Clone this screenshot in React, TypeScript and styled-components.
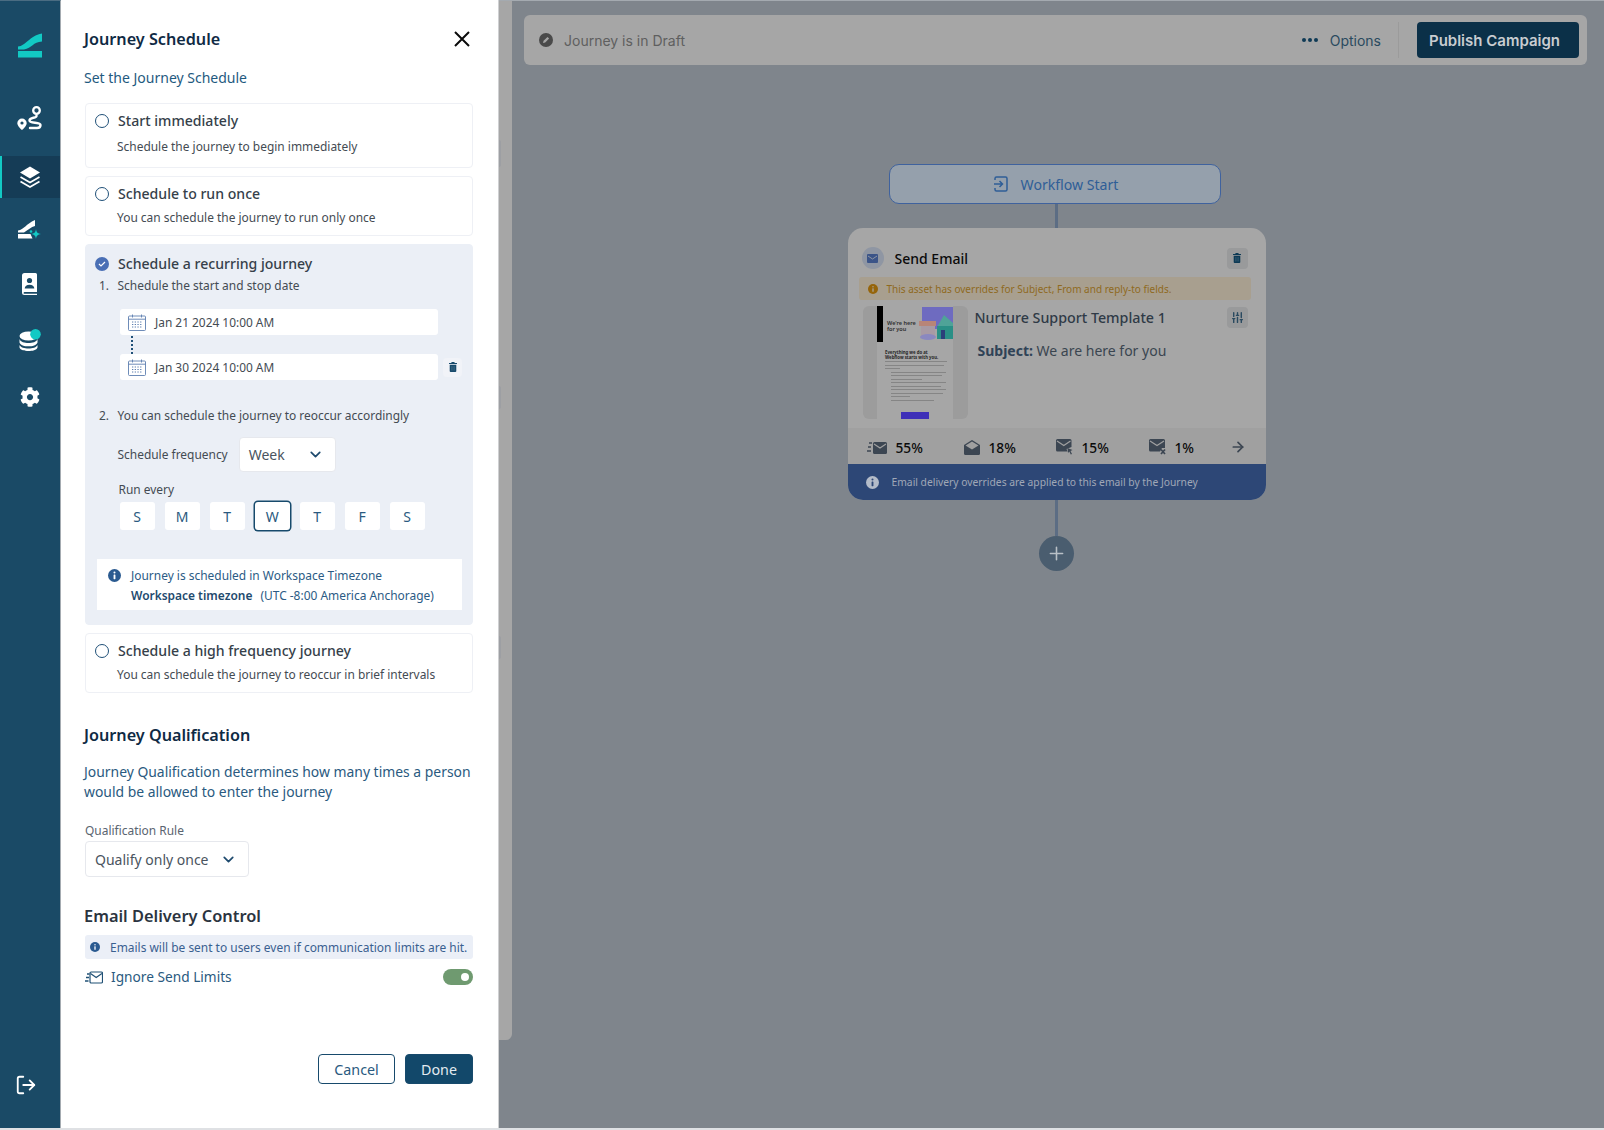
import React from 'react'
import styled, { createGlobalStyle } from 'styled-components'
import { ArrowRight, ChevronDown, LogOut, Plus, SlidersVertical } from 'lucide-react'
import { FaCog } from 'react-icons/fa'

const GlobalStyle = createGlobalStyle`
  html, body {
    margin: 0;
    padding: 0;
    height: 100%;
    overflow: hidden;
    background: #7f858c;
    font-family: "Noto Sans", "Open Sans", sans-serif;
  }
  #root {
    height: 100%;
  }
  * {
    box-sizing: border-box;
  }
  svg {
    flex-shrink: 0;
  }
`

const LogoIcon = () => (
  <svg width="24" height="25" viewBox="0 0 24 25">
    <path d="M0 13.500C8 13 11 3 24 0.500v8C15 9 14 15 6 16.500H0z" fill="#12c9c4" />
    <rect x="0" y="18" width="24" height="6.500" fill="#12c9c4" />
  </svg>
)

const RouteIcon = () => (
  <svg width="25" height="24" viewBox="0 0 25 24">
    <path d="M5 12.500a4.700 4.700 0 0 0-4.700 4.700C.3 20 5 24 5 24s4.700-4 4.700-6.800A4.700 4.700 0 0 0 5 12.500z" fill="#fff" />
    <circle cx="5" cy="17" r="1.600" fill="#1a4a66" />
    <circle cx="19.500" cy="4.500" r="3.300" fill="none" stroke="#fff" strokeWidth="2.300" />
    <path d="M19.500 9.500v.5c0 2.500-7 1-7 4.500s11 1 11 4.500c0 2-1.500 3-3.500 3h-7" fill="none" stroke="#fff" strokeWidth="2.400" strokeLinecap="round" />
  </svg>
)

const LayersIcon = () => (
  <svg width="20" height="22" viewBox="0 0 20 22">
    <path d="M10 0.500 20 6.500 10 12.500 0 6.500z" fill="#fff" />
    <path d="M.5 11 10 16.500 19.500 11M.5 15.500 10 21 19.500 15.500" fill="none" stroke="#fff" strokeWidth="1.700" />
  </svg>
)

const NewCampaignIcon = () => (
  <svg width="23" height="22" viewBox="0 0 23 22">
    <path d="M0 10.500C6 9.500 8 4 17 0v6C13 7 10 10 6 12.500H0z" fill="#fff" />
    <path d="M0 14h12.500l2 4.500H0z" fill="#fff" />
    <circle cx="13" cy="11.500" r="1.300" fill="#12c9c4" />
    <path d="M18 9c.6 3.500 1.500 4.500 5 5-3.500.6-4.400 1.500-5 5-.6-3.500-1.500-4.400-5-5 3.500-.5 4.400-1.500 5-5z" fill="#12c9c4" />
  </svg>
)

const ContactsIcon = () => (
  <svg width="15" height="22" viewBox="0 0 15 22">
    <path d="M2.500 0H13.500A1.500 1.500 0 0 1 15 1.500V19H2.500a.9.9 0 0 0 0 1.800H15V22H2.500A2.500 2.500 0 0 1 0 19.500V2.500A2.500 2.500 0 0 1 2.500 0z" fill="#fff" />
    <circle cx="7.500" cy="7.500" r="2.600" fill="#1a4a66" />
    <path d="M2.700 15.500c0-2.400 2-3.800 4.800-3.800s4.800 1.400 4.800 3.800z" fill="#1a4a66" />
  </svg>
)

const DataIcon = () => (
  <svg width="22" height="22" viewBox="0 0 22 22">
    <ellipse cx="9.500" cy="7" rx="9" ry="4.500" fill="#fff" />
    <path d="M.5 10c1 3 5 4 9 4s8-1 9-4v3.500c-1 3-5 3.800-9 3.800s-8-.8-9-3.800z" fill="#fff" />
    <path d="M.5 16c1 2.500 5 3.500 9 3.500s8-1 9-3.500v2.500c-1 2.800-5 3.500-9 3.500s-8-.7-9-3.500z" fill="#fff" />
    <circle cx="16.500" cy="5.300" r="5.300" fill="#12c9c4" />
  </svg>
)

const CalendarIcon = () => (
  <svg width="18" height="17" viewBox="0 0 18 17" fill="none" stroke="#5d7fb0" strokeWidth="0.900">
    <rect x="0.500" y="2" width="17" height="14.500" rx="1" />
    <path d="M0.500 5.200h17M4.500 0.500v3M13.500 0.500v3" />
    <path d="M4 8h10M4 10.500h10M4 13h10" strokeDasharray="1.300 1.400" strokeWidth="1.100" />
  </svg>
)

const TrashIcon = ({ color = '#174a6c' }: { color?: string }) => (
  <svg width="8" height="10" viewBox="0 0 9 11">
    <path d="M0 1h2.500L3 0h3l.5 1H9v1.200H0z" fill={color} />
    <path d="M.8 3h7.400v7a1 1 0 0 1-1 1H1.800a1 1 0 0 1-1-1z" fill={color} />
    <path d="M3 4.500v5M4.500 4.500v5M6 4.500v5" stroke="#ffffff" strokeOpacity="0.300" strokeWidth="0.500" />
  </svg>
)

const InfoIcon = ({ size, fill, mark }: { size: number, fill: string, mark: string }) => (
  <svg width={size} height={size} viewBox="0 0 14 14">
    <circle cx="7" cy="7" r="7" fill={fill} />
    <rect x="6" y="6" width="2" height="5" rx="0.500" fill={mark} />
    <circle cx="7" cy="3.800" r="1.100" fill={mark} />
  </svg>
)

const CloseIcon = () => (
  <svg width="16" height="16" viewBox="0 0 16 16">
    <path d="M1 1l14 14M15 1 1 15" stroke="#0b0b0b" strokeWidth="2" />
  </svg>
)

const DraftIcon = () => (
  <svg width="14" height="14" viewBox="0 0 14 14">
    <circle cx="7" cy="7" r="7" fill="#4a4a4a" />
    <path d="M4 10l.6-2.200L8.500 4l1.600 1.500L6.200 9.400z" fill="#a6a6a6" />
  </svg>
)

const EnterIcon = () => (
  <svg width="14" height="16" viewBox="0 0 14 16" fill="none" stroke="#2f5e97" strokeWidth="1.500">
    <path d="M1 4V2.500A1.500 1.500 0 0 1 2.500 1h9A1.500 1.500 0 0 1 13 2.500v11a1.500 1.500 0 0 1-1.500 1.500h-9A1.500 1.500 0 0 1 1 13.500V12" />
    <path d="M0 8h8M5.500 5 8.500 8 5.500 11" />
  </svg>
)

const MailGlyph = ({ color }: { color: string }) => (
  <svg width="11" height="9" viewBox="0 0 11 9">
    <rect width="11" height="9" rx="1" fill={color} />
    <path d="M1 2l4.500 3L10 2" fill="none" stroke="#8f96a3" strokeWidth="1" />
  </svg>
)

const StatSent = () => (
  <svg width="20" height="13" viewBox="0 0 20 13">
    <path d="M2 2h3M1 6h3M0 10h4" stroke="#3c4652" strokeWidth="1.500" />
    <rect x="6" y="1" width="14" height="12" rx="1.500" fill="#3c4652" />
    <path d="M7 3l6 4 6-4" fill="none" stroke="#a0a0a0" strokeWidth="1.200" />
  </svg>
)

const StatOpen = () => (
  <svg width="16" height="15" viewBox="0 0 16 15">
    <path d="M8 0l8 5v8.500a1.500 1.500 0 0 1-1.500 1.500h-13A1.500 1.500 0 0 1 0 13.500V5z" fill="#3c4652" />
    <path d="M1.500 5.500 8 9.500l6.500-4L8 1.500z" fill="#a0a0a0" />
  </svg>
)

const StatClick = () => (
  <svg width="17" height="16" viewBox="0 0 17 16">
    <path d="M1.500 0h12.500A1.500 1.500 0 0 1 15.500 1.500V8l-5 2 1 2.500H1.500A1.500 1.500 0 0 1 0 11V1.500A1.500 1.500 0 0 1 1.500 0z" fill="#3c4652" />
    <path d="M1 2l6.800 4.500L14.500 2" fill="none" stroke="#a0a0a0" strokeWidth="1.200" />
    <path d="M11.500 9l5 2-2 1 1.500 3-1.200.6-1.500-3-1.300 1.300z" fill="#3c4652" />
  </svg>
)

const StatUnsub = () => (
  <svg width="17" height="16" viewBox="0 0 17 16">
    <path d="M1.500 0h13A1.500 1.500 0 0 1 16 1.500V9h-3l-2 3.500H1.500A1.500 1.500 0 0 1 0 11V1.500A1.500 1.500 0 0 1 1.500 0z" fill="#3c4652" />
    <path d="M1 2l7 4.500L15 2" fill="none" stroke="#a0a0a0" strokeWidth="1.200" />
    <path d="M12 10.500l4 4.500M16 10.500l-4 4.500" stroke="#3c4652" strokeWidth="1.700" />
  </svg>
)

const OutlineFastMail = () => (
  <svg width="18" height="13" viewBox="0 0 18 13" fill="none" stroke="#1f5075">
    <path d="M2 3h2.500M1 6.500h3M0 10h3.500" strokeWidth="1.300" />
    <rect x="5" y="1" width="12.500" height="11" rx="1.200" strokeWidth="1.200" />
    <path d="M5.500 2.500l5.700 4 5.700-4" strokeWidth="1.200" />
  </svg>
)

const Page = styled.div`
  display: flex;
  height: 100%;
  border-bottom: 2px solid #dfe1e4;
`

const Sidebar = styled.nav`
  width: 61px;
  flex-shrink: 0;
  background: #1a4a66;
  border-right: 1px solid #a4abb1;
  border-top: 1px solid #4a6c82;
  display: flex;
  flex-direction: column;
  align-items: stretch;
`

const LogoSlot = styled.div`
  height: 46px;
  margin-top: 32px;
  display: flex;
  justify-content: center;
  align-items: flex-start;
`

const NavItem = styled.div<{ $active?: boolean; $h: number }>`
  height: ${(p) => p.$h}px;
  display: flex;
  align-items: center;
  justify-content: center;
  padding-right: 1px;
  background: ${(p) => (p.$active ? '#153c56' : 'transparent')};
  box-shadow: ${(p) => (p.$active ? 'inset 2px 0 0 #12c9c4' : 'none')};
`

const LogoutSlot = styled.div`
  margin-top: auto;
  margin-bottom: 32px;
  padding-left: 15px;
  color: #fff;
  display: flex;
`

const Drawer = styled.aside`
  width: 438px;
  flex-shrink: 0;
  background: #fff;
  padding: 28px 25px 44px 24px;
  border-right: 1px solid #cfd0d2;
  display: flex;
  flex-direction: column;
`

const DrawerHead = styled.div`
  display: flex;
  align-items: center;
  justify-content: space-between;
  padding-right: 3px;
`

const Title = styled.h2<{ $dark?: boolean; $gap?: number; $size?: number }>`
  margin: ${(p) => p.$gap ?? 0}px 0 0 -1px;
  font-size: ${(p) => p.$size ?? 16.2}px;
  line-height: 22px;
  font-weight: 600;
  color: ${(p) => (p.$dark ? '#2b3440' : '#0f2a44')};
`

const Lead = styled.p`
  margin: 18px 0 15px -1px;
  font-size: 14px;
  line-height: 20px;
  color: #1f5a80;
`

const Cards = styled.div`
  display: flex;
  flex-direction: column;
  gap: 8px;
`

const Card = styled.section<{ $selected?: boolean; $pad: number }>`
  border: 1px solid ${(p) => (p.$selected ? '#ebeff6' : '#eef0f5')};
  background: ${(p) => (p.$selected ? '#ebeff6' : '#fff')};
  border-radius: 4px;
  padding: ${(p) => (p.$selected ? 9 : 7)}px 10px ${(p) => p.$pad}px 9px;
`

const OptionHead = styled.div`
  display: flex;
  align-items: center;
  gap: 9px;
`

const Radio = styled.span`
  width: 14px;
  height: 14px;
  flex-shrink: 0;
  border-radius: 50%;
  border: 1.300px solid #1f5078;
  background: #fff;
`

const RadioChecked = styled.span`
  width: 14px;
  height: 14px;
  flex-shrink: 0;
  border-radius: 50%;
  background: #4a6fb5;
  display: flex;
  align-items: center;
  justify-content: center;
`

const OptionTitle = styled.span`
  font-size: 14.100px;
  line-height: 20px;
  font-weight: 500;
  color: #363f4a;
`

const OptionDesc = styled.p<{ $gap: number }>`
  margin: ${(p) => p.$gap}px 0 0 22px;
  font-size: 11.950px;
  line-height: 18px;
  color: #444b53;
`

const Step = styled.div<{ $gap: number }>`
  display: flex;
  margin: ${(p) => p.$gap}px 0 0 4px;
  font-size: 11.950px;
  line-height: 18px;
  color: #444b53;
`

const StepNumber = styled.span`
  width: 18.500px;
`

const DateList = styled.div`
  margin: 14px 0 0 25px;
`

const DateRow = styled.div`
  display: flex;
  align-items: center;
  gap: 5px;
`

const DateField = styled.div`
  width: 318px;
  height: 26px;
  background: #fff;
  border-radius: 3px;
  padding-left: 8px;
  display: flex;
  align-items: center;
  gap: 9px;
  font-size: 11.900px;
  color: #444b53;
`

const DateConnector = styled.div`
  height: 18px;
  width: 2px;
  margin: 1px 0 0 11px;
  border-left: 2px dotted #1f5078;
`

const DeleteDate = styled.button`
  width: 19px;
  height: 19px;
  padding: 0;
  border: none;
  border-radius: 4px;
  background: #f1f3f8;
  display: flex;
  align-items: center;
  justify-content: center;
`

const FrequencyRow = styled.div`
  display: flex;
  align-items: center;
  gap: 11px;
  margin: 12px 0 0 22.500px;
  font-size: 11.950px;
  color: #444b53;
`

const SelectBox = styled.div<{ $w: number; $h: number }>`
  width: ${(p) => p.$w}px;
  height: ${(p) => p.$h}px;
  background: #fff;
  border: 1px solid #e6e8ed;
  border-radius: 4px;
  padding: 0 11px 0 9px;
  display: flex;
  align-items: center;
  justify-content: space-between;
  font-size: 14px;
  color: #4a5460;
`

const RunEvery = styled.div`
  margin: 9px 0 0 23.500px;
  font-size: 11.950px;
  line-height: 18px;
  color: #444b53;
`

const Days = styled.div`
  display: flex;
  gap: 10px;
  margin: 3px 0 0 24.700px;
`

const Day = styled.span<{ $active?: boolean }>`
  width: 35px;
  height: 28px;
  border-radius: 3px;
  background: #fff;
  display: flex;
  align-items: center;
  justify-content: center;
  font-size: 14px;
  color: #2a5a80;
  box-shadow: ${(p) => (p.$active ? '0 0 0 1.500px #174a6c' : 'none')};
`

const TimezoneNote = styled.div`
  margin: 29px 0 0 1.500px;
  height: 51px;
  background: #fff;
  padding: 6px 10px 6px 11px;
  display: grid;
  grid-template-columns: 23.500px 1fr;
  grid-auto-rows: 20.500px;
  align-items: center;
  font-size: 11.950px;
  color: #2b5b85;
`

const NoteLine = styled.span`
  grid-column: 2;
`

const Strong = styled.strong`
  font-weight: 600;
  color: #1e4a6e;
  margin-right: 8px;
`

const Paragraph = styled.p`
  margin: 16px 0 0 -1px;
  font-size: 13.920px;
  line-height: 20px;
  color: #2a5a80;
`

const FieldLabel = styled.label`
  display: block;
  margin: 20px 0 1px;
  font-size: 11.950px;
  line-height: 18px;
  color: #5a6470;
`

const Notice = styled.div`
  margin-top: 8px;
  height: 24px;
  background: #ebeff7;
  border-radius: 3px;
  padding-left: 5px;
  display: flex;
  align-items: center;
  gap: 10px;
  font-size: 11.950px;
  color: #3a6090;
  white-space: nowrap;
`

const ToggleRow = styled.div`
  margin-top: 8px;
  height: 20px;
  display: flex;
  align-items: center;
  gap: 8px;
  font-size: 13.700px;
  color: #2a5a80;
`

const ToggleText = styled.span`
  padding-bottom: 2px;
`

const Toggle = styled.span`
  margin-left: auto;
  width: 30px;
  height: 16px;
  border-radius: 8px;
  background: #6f9a70;
  padding: 4px 4px;
  display: flex;
  justify-content: flex-end;
`

const Knob = styled.span`
  width: 8px;
  height: 8px;
  border-radius: 50%;
  background: #fff;
`

const Footer = styled.div`
  margin-top: auto;
  display: flex;
  justify-content: flex-end;
  gap: 10px;
`

const Button = styled.button<{ $primary?: boolean; $w: number }>`
  width: ${(p) => p.$w}px;
  height: 30px;
  border-radius: 4px;
  border: 1px solid #174a6c;
  background: ${(p) => (p.$primary ? '#12486a' : '#fff')};
  color: ${(p) => (p.$primary ? '#e3ebf0' : '#2a5a80')};
  font-family: inherit;
  font-size: 14.300px;
`

const Canvas = styled.main`
  flex: 1;
  display: flex;
  min-width: 0;
  border-top: 1px solid #a4aab0;
`

const LeftRail = styled.div`
  width: 13px;
  height: 1039px;
  flex-shrink: 0;
  background: #a6a6a6;
  border-bottom-right-radius: 6px;
`

const RailHandle = styled.span<{ $top: number; $h: number }>`
  display: block;
  width: 2px;
  height: ${(p) => p.$h}px;
  margin-top: ${(p) => p.$top}px;
  background: #9d9fa3;
  border-radius: 0 2px 2px 0;
`

const CanvasBody = styled.div`
  flex: 1;
  min-width: 0;
  padding: 14px 17px 0 12px;
`

const TopBar = styled.header`
  height: 50px;
  background: #a6a6a6;
  border-radius: 6px;
  padding: 0 8px 0 15px;
  display: flex;
  align-items: center;
  font-family: Inter, "Noto Sans", sans-serif;
`

const DraftLabel = styled.span`
  margin-left: 11px;
  font-size: 14px;
  color: #5f5f5f;
`

const Options = styled.div`
  margin-left: auto;
  display: flex;
  align-items: center;
  gap: 12px;
  height: 100%;
  font-size: 14px;
  color: #2a4a5f;
  padding-right: 17px;
`

const OptionsDivider = styled.span`
  width: 1px;
  height: 36px;
  background: #9b9b9b;
  margin-right: 18px;
`

const Dots = styled.span`
  display: flex;
  gap: 2px;
`

const Dot = styled.i`
  width: 4px;
  height: 4px;
  border-radius: 50%;
  background: #0f3a55;
`

const Publish = styled.button`
  width: 162px;
  height: 36px;
  padding: 0 7px 0 0;
  border: none;
  border-radius: 4px;
  background: #0b3048;
  color: #c8ccd0;
  font-family: inherit;
  font-size: 15px;
  font-weight: 600;
`

const Flow = styled.div`
  display: flex;
  flex-direction: column;
  align-items: center;
  padding-left: 2px;
`

const StartNode = styled.div`
  margin: 99px 4px 0 0;
  width: 332px;
  height: 40px;
  border: 1px solid #3f629e;
  border-radius: 10px;
  background: #95a0ac;
  padding-left: 3px;
  display: flex;
  align-items: center;
  justify-content: center;
  gap: 13px;
  font-size: 14.100px;
  color: #2f5e97;
`

const Line = styled.span<{ $h: number }>`
  width: 3px;
  height: ${(p) => p.$h}px;
  background: #5c6d84;
`

const EmailCard = styled.article`
  width: 418px;
  height: 272px;
  background: #a6a6a6;
  border-radius: 15px;
  overflow: hidden;
  display: flex;
  flex-direction: column;
`

const EmailHead = styled.div`
  height: 22px;
  margin: 19px 18px 0 14px;
  display: flex;
  align-items: center;
  gap: 11px;
  font-size: 14px;
  font-weight: 500;
  color: #0a0a0a;
`

const GlyphCircle = styled.span`
  width: 22px;
  height: 22px;
  border-radius: 50%;
  background: #8f96a3;
  display: flex;
  align-items: center;
  justify-content: center;
`

const SquareBtn = styled.span<{ $push?: boolean }>`
  width: 21px;
  height: 21px;
  margin-left: ${(p) => (p.$push ? 'auto' : '0')};
  border-radius: 4px;
  background: #999a9b;
  flex-shrink: 0;
  display: flex;
  align-items: center;
  justify-content: center;
  color: #2a4a60;
`

const Warning = styled.div`
  margin: 8px 15px 0 11px;
  height: 23px;
  background: #a89f8f;
  border-radius: 3px;
  padding-left: 9px;
  display: flex;
  align-items: center;
  gap: 9px;
  font-size: 10px;
  color: #8f6a1e;
`

const EmailBody = styled.div`
  height: 113px;
  margin: 6px 18px 0 15px;
  display: flex;
`

const Thumb = styled.div`
  width: 105px;
  flex-shrink: 0;
  background: #9c9c9c;
  border-radius: 6px;
  display: flex;
  justify-content: center;
`

const ThumbDoc = styled.div`
  width: 76px;
  background: #a6a6a6;
  position: relative;
  padding: 44px 6px 0 8px;
`

const ThumbBar = styled.span`
  position: absolute;
  left: 0;
  top: 0;
  width: 6px;
  height: 36px;
  background: #000;
`

const ThumbHero = styled.span`
  position: absolute;
  left: 10px;
  top: 14px;
  font-size: 5.500px;
  line-height: 6px;
  font-weight: 600;
  color: #2d2d2d;
  white-space: nowrap;
`

const ThumbArt = styled.svg`
  position: absolute;
  left: 42px;
  top: 0;
`

const ThumbHeading = styled.div`
  font-size: 4.300px;
  line-height: 4.500px;
  font-weight: 700;
  color: #262626;
  margin-bottom: 2px;
`

const ThumbLine = styled.div<{ $w: number; $indent?: boolean }>`
  height: 1px;
  width: ${(p) => p.$w}%;
  margin: 0 0 2.500px ${(p) => (p.$indent ? 6 : 0)}px;
  background: #858585;
`

const ThumbCta = styled.span`
  position: absolute;
  left: 24px;
  bottom: 0;
  width: 28px;
  height: 7px;
  background: #3f30b8;
`

const EmailText = styled.div`
  flex: 1;
  padding-left: 7px;
`

const TemplateRow = styled.div`
  display: flex;
  align-items: flex-start;
  justify-content: space-between;
  font-size: 14.250px;
  line-height: 21px;
  font-weight: 500;
  color: #2f3a46;
  padding-top: 1px;
`

const Subject = styled.p`
  margin: 12px 0 0 3px;
  font-size: 14px;
  line-height: 21px;
  color: #3a4550;
`

const SubjectKey = styled.b`
  font-weight: 700;
  color: #2f4256;
`

const Stats = styled.div`
  margin-top: 9px;
  height: 36px;
  background: #a0a0a0;
  padding: 2px 20px 0 19px;
  display: grid;
  grid-template-columns: 97px 92px 93px 1fr auto;
  align-items: center;
  color: #3c4652;
`

const Stat = styled.div`
  display: flex;
  align-items: center;
  gap: 9px;
  font-size: 13.700px;
  font-weight: 500;
  color: #0a0a0a;
`

const Banner = styled.div`
  flex: 1;
  background: #2d4776;
  padding-left: 18px;
  display: flex;
  align-items: center;
  gap: 13px;
  font-size: 10.300px;
  color: #a0a8b6;
`

const AddStep = styled.span`
  width: 35px;
  height: 35px;
  border-radius: 50%;
  background: #4a5d6f;
  color: #b9c0c6;
  display: flex;
  align-items: center;
  justify-content: center;
`

const Chevron = () => <ChevronDown size={17} strokeWidth={2.4} color="#1e4a6e" />

const WEEK_DAYS = ['S', 'M', 'T', 'W', 'T', 'F', 'S']

const ScheduleOption = ({ title, desc, tall }: { title: string, desc: string, tall?: boolean }) => (
  <Card $pad={tall ? 11 : 8}>
    <OptionHead>
      <Radio />
      <OptionTitle>{title}</OptionTitle>
    </OptionHead>
    <OptionDesc $gap={tall ? 7 : 5}>{desc}</OptionDesc>
  </Card>
)

const Nav = () => (
  <Sidebar>
    <LogoSlot>
      <LogoIcon />
    </LogoSlot>
    <NavItem $h={77}><RouteIcon /></NavItem>
    <NavItem $h={42} $active><LayersIcon /></NavItem>
    <NavItem $h={66}><NewCampaignIcon /></NavItem>
    <NavItem $h={40}><ContactsIcon /></NavItem>
    <NavItem $h={71}><DataIcon /></NavItem>
    <NavItem $h={44}><FaCog size={20} color="#fff" /></NavItem>
    <LogoutSlot>
      <LogOut size={22} strokeWidth={2} />
    </LogoutSlot>
  </Sidebar>
)

const WorkflowCard = () => (
  <EmailCard>
    <EmailHead>
      <GlyphCircle><MailGlyph color="#3b5488" /></GlyphCircle>
      Send Email
      <SquareBtn $push><TrashIcon color="#0d3a55" /></SquareBtn>
    </EmailHead>
    <Warning>
      <InfoIcon size={10} fill="#96650a" mark="#a89f8f" />
      This asset has overrides for Subject, From and reply-to fields.
    </Warning>
    <EmailBody>
      <Thumb>
        <ThumbDoc>
          <ThumbBar />
          <ThumbHero>We're here<br />for you</ThumbHero>
          <ThumbArt width="34" height="35" viewBox="0 0 34 35">
            <rect x="3" y="1" width="31" height="22" fill="#6e6bc0" />
            <path d="M18 21 25 9l9 8v16H18z" fill="#4fa398" />
            <rect x="18" y="20" width="16" height="13" fill="#2a8f86" />
            <rect x="22" y="24" width="4" height="9" fill="#2b3f7a" />
            <rect x="0" y="15" width="17" height="5" fill="#b88578" />
            <rect x="2" y="20" width="14" height="10" fill="#a89aa4" />
            <ellipse cx="9" cy="31" rx="8" ry="3" fill="#8a88c0" />
          </ThumbArt>
          <ThumbHeading>Everything we do at Webflow starts with you.</ThumbHeading>
          <ThumbLine $w={100} />
          <ThumbLine $w={95} />
          <ThumbLine $w={24} />
          <ThumbLine $w={88} $indent />
          <ThumbLine $w={82} $indent />
          <ThumbLine $w={50} $indent />
          <ThumbLine $w={88} $indent />
          <ThumbLine $w={80} $indent />
          <ThumbLine $w={88} $indent />
          <ThumbLine $w={84} $indent />
          <ThumbLine $w={30} $indent />
          <ThumbLine $w={70} $indent />
          <ThumbCta />
        </ThumbDoc>
      </Thumb>
      <EmailText>
        <TemplateRow>
          Nurture Support Template 1
          <SquareBtn><SlidersVertical size={13} strokeWidth={2.6} /></SquareBtn>
        </TemplateRow>
        <Subject><SubjectKey>Subject:</SubjectKey> We are here for you</Subject>
      </EmailText>
    </EmailBody>
    <Stats>
      <Stat><StatSent /> 55%</Stat>
      <Stat><StatOpen /> 18%</Stat>
      <Stat><StatClick /> 15%</Stat>
      <Stat><StatUnsub /> 1%</Stat>
      <ArrowRight size={16} strokeWidth={2.6} />
    </Stats>
    <Banner>
      <InfoIcon size={13} fill="#b4bcc9" mark="#2d4776" />
      Email delivery overrides are applied to this email by the Journey
    </Banner>
  </EmailCard>
)

export default function App() {
  return (
    <>
      <GlobalStyle />
      <Page>
        <Nav />
        <Drawer>
          <DrawerHead>
            <Title>Journey Schedule</Title>
            <CloseIcon />
          </DrawerHead>
          <Lead>Set the Journey Schedule</Lead>
          <Cards>
            <ScheduleOption tall title="Start immediately" desc="Schedule the journey to begin immediately" />
            <ScheduleOption title="Schedule to run once" desc="You can schedule the journey to run only once" />
            <Card $selected $pad={14}>
              <OptionHead>
                <RadioChecked>
                  <svg width="8" height="6" viewBox="0 0 8 6">
                    <path d="M1 3l2 2 4-4" fill="none" stroke="#fff" strokeWidth="1.200" />
                  </svg>
                </RadioChecked>
                <OptionTitle>Schedule a recurring journey</OptionTitle>
              </OptionHead>
              <Step $gap={3}><StepNumber>1.</StepNumber>Schedule the start and stop date</Step>
              <DateList>
                <DateRow>
                  <DateField><CalendarIcon />Jan 21 2024 10:00 AM</DateField>
                </DateRow>
                <DateConnector />
                <DateRow>
                  <DateField><CalendarIcon />Jan 30 2024 10:00 AM</DateField>
                  <DeleteDate><TrashIcon /></DeleteDate>
                </DateRow>
              </DateList>
              <Step $gap={27}><StepNumber>2.</StepNumber>You can schedule the journey to reoccur accordingly</Step>
              <FrequencyRow>
                Schedule frequency
                <SelectBox $w={97} $h={35}>Week<Chevron /></SelectBox>
              </FrequencyRow>
              <RunEvery>Run every</RunEvery>
              <Days>
                {WEEK_DAYS.map((day, i) => (
                  <Day key={i} $active={i === 3}>{day}</Day>
                ))}
              </Days>
              <TimezoneNote>
                <InfoIcon size={13} fill="#2a5a90" mark="#fff" />
                <span>Journey is scheduled in Workspace Timezone</span>
                <NoteLine><Strong>Workspace timezone</Strong>(UTC -8:00 America Anchorage)</NoteLine>
              </TimezoneNote>
            </Card>
            <ScheduleOption title="Schedule a high frequency journey" desc="You can schedule the journey to reoccur in brief intervals" />
          </Cards>
          <Title $gap={31}>Journey Qualification</Title>
          <Paragraph>Journey Qualification determines how many times a person would be allowed to enter the journey</Paragraph>
          <FieldLabel>Qualification Rule</FieldLabel>
          <SelectBox $w={164} $h={36}>Qualify only once<Chevron /></SelectBox>
          <Title $dark $gap={28} $size={16.4}>Email Delivery Control</Title>
          <Notice>
            <InfoIcon size={10} fill="#2a5a90" mark="#ebeff7" />
            Emails will be sent to users even if communication limits are hit.
          </Notice>
          <ToggleRow>
            <OutlineFastMail />
            <ToggleText>Ignore Send Limits</ToggleText>
            <Toggle><Knob /></Toggle>
          </ToggleRow>
          <Footer>
            <Button $w={77}>Cancel</Button>
            <Button $w={68} $primary>Done</Button>
          </Footer>
        </Drawer>
        <Canvas>
          <LeftRail>
            <RailHandle $top={139} $h={27} />
            <RailHandle $top={219} $h={23} />
            <RailHandle $top={227} $h={23} />
          </LeftRail>
          <CanvasBody>
            <TopBar>
              <DraftIcon />
              <DraftLabel>Journey is in Draft</DraftLabel>
              <Options>
                <Dots><Dot /><Dot /><Dot /></Dots>
                Options
              </Options>
              <OptionsDivider />
              <Publish>Publish Campaign</Publish>
            </TopBar>
            <Flow>
              <StartNode><EnterIcon />Workflow Start</StartNode>
              <Line $h={24} />
              <WorkflowCard />
              <Line $h={36} />
              <AddStep><Plus size={21} strokeWidth={1.8} /></AddStep>
            </Flow>
          </CanvasBody>
        </Canvas>
      </Page>
    </>
  )
}
